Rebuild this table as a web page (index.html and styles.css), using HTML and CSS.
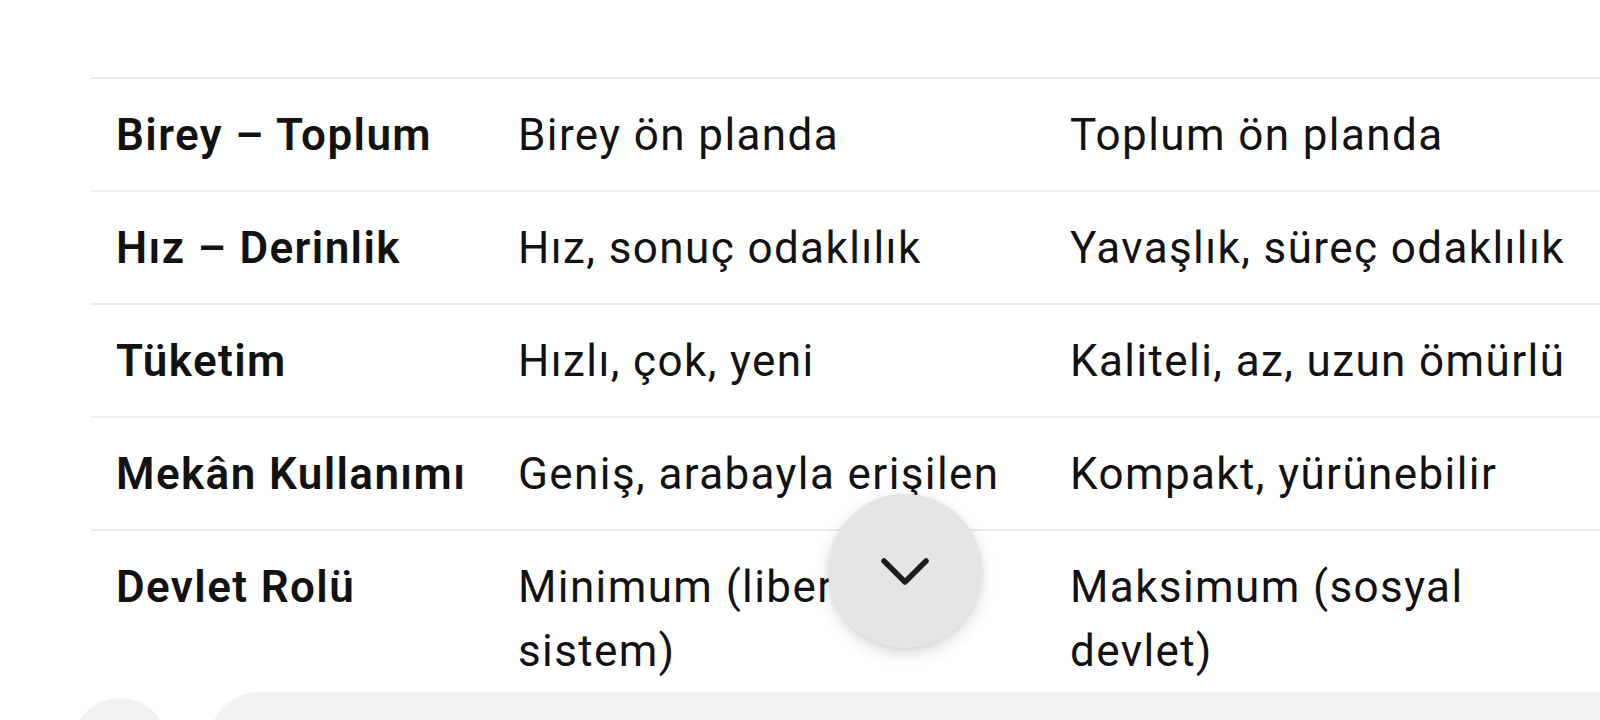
FILE: index.html
```html
<!DOCTYPE html>
<html lang="tr">
<head>
<meta charset="utf-8">
<title>Karşılaştırma</title>
<link rel="stylesheet" href="styles.css">
</head>
<body>
<main class="page">
  <div class="table-wrap">
    <table class="cmp">
      <colgroup>
        <col class="c1"><col class="c2"><col class="c3">
      </colgroup>
      <tbody>
        <tr><th>Birey – Toplum</th><td>Birey ön planda</td><td>Toplum ön planda</td></tr>
        <tr><th>Hız – Derinlik</th><td>Hız, sonuç odaklılık</td><td>Yavaşlık, süreç odaklılık</td></tr>
        <tr><th>Tüketim</th><td>Hızlı, çok, yeni</td><td>Kaliteli, az, uzun ömürlü</td></tr>
        <tr><th>Mekân Kullanımı</th><td>Geniş, arabayla erişilen</td><td>Kompakt, yürünebilir</td></tr>
        <tr><th>Devlet Rolü</th><td>Minimum (liberal sistem)</td><td>Maksimum (sosyal devlet)</td></tr>
      </tbody>
    </table>
  </div>
</main>

<button class="fab" aria-label="Aşağı kaydır">
  <svg width="52" height="32" viewBox="0 0 52 32" aria-hidden="true">
    <path d="M5 6 L26 27 L47 6" fill="none" stroke="#1c1c1c" stroke-width="5.5" stroke-linecap="round" stroke-linejoin="round"/>
  </svg>
</button>

<div class="composer">
  <span class="composer-btn"></span>
  <span class="composer-input"></span>
</div>
</body>
</html>
```

FILE: styles.css
```css
html, body {
  margin: 0;
  padding: 0;
  background: #ffffff;
  overflow: hidden;
}

body {
  width: 1600px;
  height: 720px;
  font-family: Roboto, "Noto Sans", "Liberation Sans", sans-serif;
  color: #121212;
}

.page {
  padding-top: 77px;
  padding-left: 91px;
}

.table-wrap {
  width: 1509px;
  height: 643px;
  overflow: hidden;
}

.cmp {
  border-collapse: collapse;
  table-layout: fixed;
  width: 1560px;
  border-top: 2px solid #e9e9e9;
}

.cmp .c1 { width: 402px; }
.cmp .c2 { width: 552px; }
.cmp .c3 { width: 606px; }

.cmp th,
.cmp td {
  text-align: left;
  vertical-align: top;
  font-size: 44px;
  line-height: 64px;
  padding: 24px 25px 23px 25px;
  border-bottom: 2px solid #ececec;
  letter-spacing: 1.4px;
}

.cmp th {
  font-weight: 600;
  white-space: nowrap;
}

.cmp td {
  font-weight: 400;
}

.cmp td:last-child {
  padding-right: 60px;
}

.fab {
  position: absolute;
  left: 828px;
  top: 494px;
  width: 154px;
  height: 154px;
  border: none;
  border-radius: 50%;
  background: #e5e5e5;
  box-shadow: 0 6px 16px rgba(0, 0, 0, 0.14), 0 1px 4px rgba(0, 0, 0, 0.06);
  display: flex;
  align-items: center;
  justify-content: center;
  padding: 0;
}

.composer {
  position: absolute;
  left: 0;
  top: 692px;
  width: 1600px;
  height: 28px;
  overflow: hidden;
  display: flex;
  align-items: flex-start;
  gap: 41px;
  padding-left: 72px;
  box-sizing: border-box;
  background: #ffffff;
}

.composer-btn {
  margin-top: 6px;
  width: 96px;
  height: 96px;
  border-radius: 50%;
  background: #f1f1f1;
  flex: none;
}

.composer-input {
  flex: 1;
  height: 100px;
  border-radius: 56px 0 0 56px;
  background: #f1f1f1;
}
```
